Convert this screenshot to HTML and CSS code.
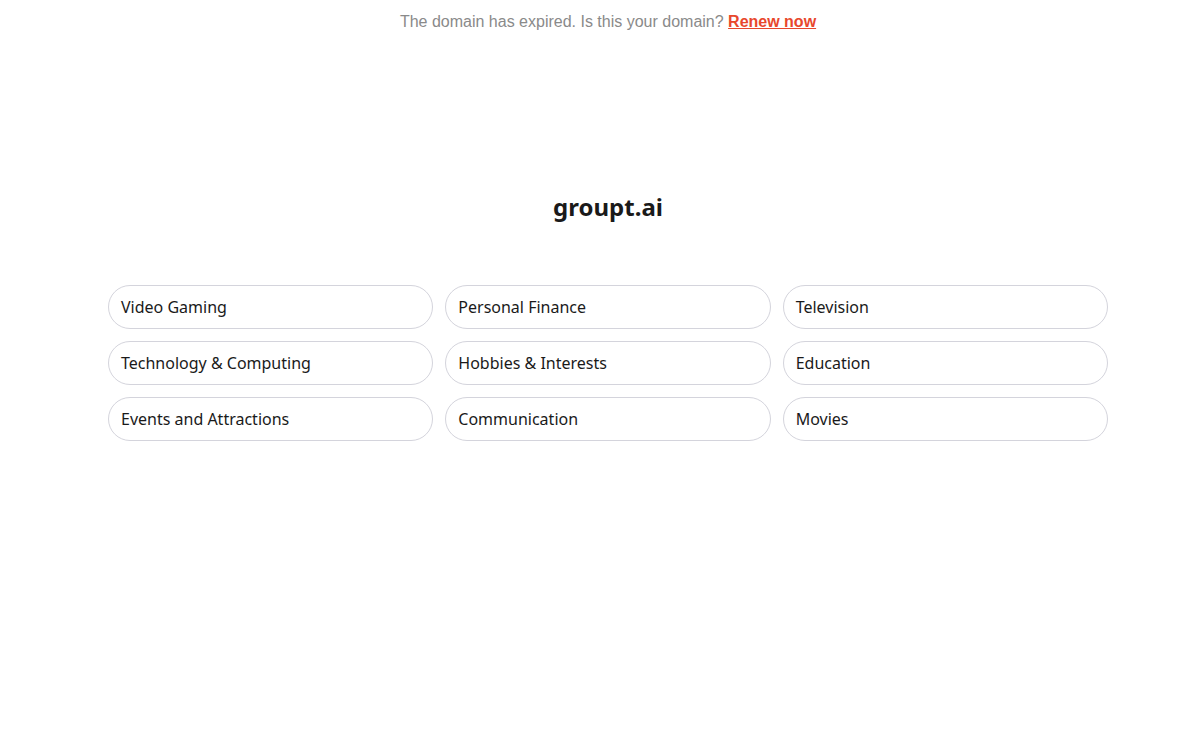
FILE: index.html
```html
<!DOCTYPE html>
<html>
<head>
<meta charset="utf-8">
<link rel="stylesheet" href="styles.css">
</head>
<body>
<div class="page">
  <div class="banner">The domain has expired. Is this your domain? <a class="renew" href="#">Renew now</a></div>
  <h1 class="title">groupt.ai</h1>
  <div class="grid">
    <a class="pill" href="#">Video Gaming</a>
    <a class="pill" href="#">Personal Finance</a>
    <a class="pill" href="#">Television</a>
    <a class="pill" href="#">Technology &amp; Computing</a>
    <a class="pill" href="#">Hobbies &amp; Interests</a>
    <a class="pill" href="#">Education</a>
    <a class="pill" href="#">Events and Attractions</a>
    <a class="pill" href="#">Communication</a>
    <a class="pill" href="#">Movies</a>
  </div>
</div>
</body>
</html>
```
FILE: styles.css
```css
html, body {
  margin: 0;
  padding: 0;
  background: #fff;
}
body {
  padding-left: 16px;
}
.page {
  display: flex;
  flex-direction: column;
  align-items: center;
}
.banner {
  font-family: "Liberation Sans", Arial, sans-serif;
  font-size: 16px;
  line-height: 20px;
  color: #8a8a8a;
  padding-top: 12px;
}
.renew {
  color: #e8472c;
  font-weight: bold;
  text-decoration: underline;
}
.title {
  font-family: "Noto Sans", sans-serif;
  font-size: 24px;
  font-weight: 700;
  color: #1a1a1a;
  line-height: 32px;
  margin: 159px 0 0 0;
}
.grid {
  margin-top: 62px;
  width: 1000px;
  display: grid;
  grid-template-columns: repeat(3, 1fr);
  column-gap: 12px;
  row-gap: 12px;
}
.pill {
  display: flex;
  align-items: center;
  height: 42px;
  padding: 0 12px;
  border: 1px solid #d4d4dc;
  border-radius: 22px;
  font-family: "Noto Sans", sans-serif;
  font-size: 16px;
  color: #1a1a1a;
  text-decoration: none;
}
```
